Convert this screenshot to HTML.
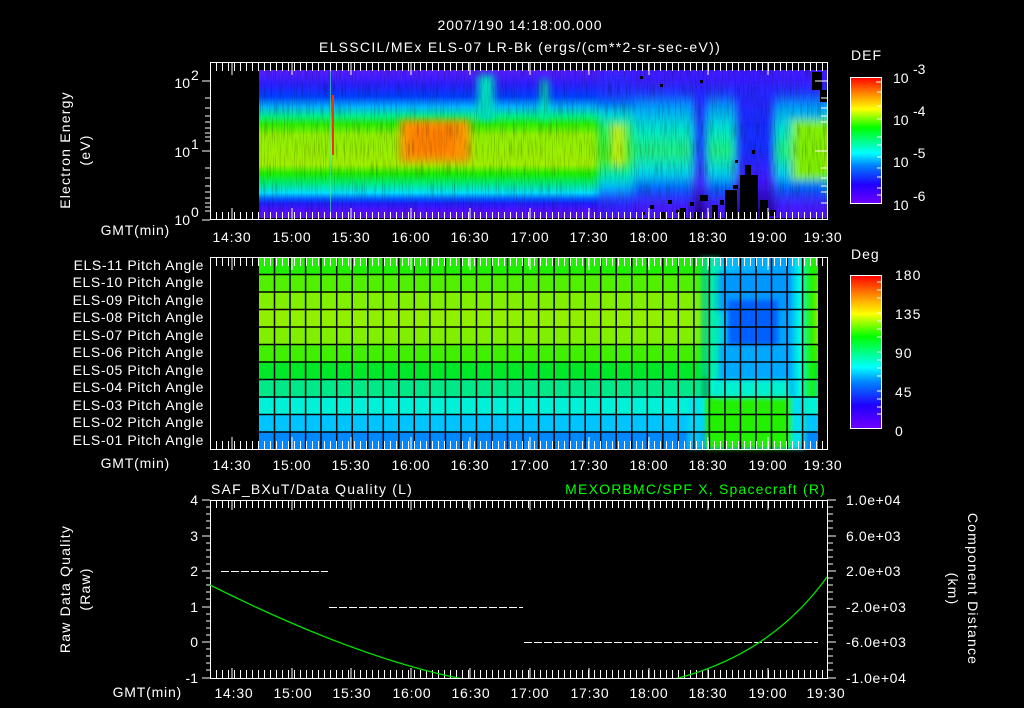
<!DOCTYPE html>
<html><head><meta charset="utf-8"><style>
html,body{margin:0;padding:0;background:#000;}
svg{display:block}
text{font-family:"Liberation Sans",sans-serif;fill:#fff;font-size:14px}
</style></head><body>
<svg width="1024" height="708" viewBox="0 0 1024 708" xmlns="http://www.w3.org/2000/svg">
<defs>
<linearGradient id="spec" x1="0" y1="70" x2="0" y2="218" gradientUnits="userSpaceOnUse">
<stop offset="0" stop-color="#5a1cff"/><stop offset="0.1" stop-color="#2a20ff"/>
<stop offset="0.18" stop-color="#0040ff"/><stop offset="0.25" stop-color="#00b8ff"/>
<stop offset="0.31" stop-color="#00f090"/><stop offset="0.37" stop-color="#30f000"/>
<stop offset="0.44" stop-color="#90f000"/><stop offset="0.64" stop-color="#a0f000"/>
<stop offset="0.7" stop-color="#20f000"/><stop offset="0.76" stop-color="#00f070"/>
<stop offset="0.83" stop-color="#00e0ff"/><stop offset="0.87" stop-color="#0060ff"/>
<stop offset="0.9" stop-color="#2020ff"/><stop offset="0.95" stop-color="#5010ff"/>
<stop offset="1" stop-color="#6010f0"/></linearGradient>
<linearGradient id="mid" x1="0" y1="70" x2="0" y2="218" gradientUnits="userSpaceOnUse">
<stop offset="0" stop-color="#4020ff"/><stop offset="0.15" stop-color="#2030ff"/>
<stop offset="0.22" stop-color="#0060ff"/><stop offset="0.3" stop-color="#00e0e0"/>
<stop offset="0.4" stop-color="#20f060"/><stop offset="0.6" stop-color="#40f020"/>
<stop offset="0.72" stop-color="#00f0c0"/><stop offset="0.8" stop-color="#00b0ff"/>
<stop offset="0.88" stop-color="#2030ff"/><stop offset="1" stop-color="#5010ff"/></linearGradient>
<linearGradient id="mid2" x1="0" y1="70" x2="0" y2="218" gradientUnits="userSpaceOnUse">
<stop offset="0" stop-color="#4020ff"/><stop offset="0.15" stop-color="#2030ff"/>
<stop offset="0.25" stop-color="#00a0ff"/><stop offset="0.4" stop-color="#00e8d0"/>
<stop offset="0.55" stop-color="#20f080"/><stop offset="0.7" stop-color="#00d8f0"/>
<stop offset="0.8" stop-color="#0060ff"/><stop offset="0.9" stop-color="#4020ff"/><stop offset="1" stop-color="#5010ff"/></linearGradient>
<linearGradient id="blu" x1="0" y1="70" x2="0" y2="218" gradientUnits="userSpaceOnUse">
<stop offset="0" stop-color="#3020ff"/><stop offset="0.5" stop-color="#1030ff"/>
<stop offset="0.75" stop-color="#4018ff"/><stop offset="1" stop-color="#200080"/></linearGradient>
<linearGradient id="cb" x1="0" y1="1" x2="0" y2="0">
<stop offset="0" stop-color="#7000ff"/><stop offset="0.15" stop-color="#2000ff"/>
<stop offset="0.3" stop-color="#0080ff"/><stop offset="0.4" stop-color="#00ffff"/>
<stop offset="0.5" stop-color="#00ff80"/><stop offset="0.6" stop-color="#00ff00"/>
<stop offset="0.75" stop-color="#ffff00"/><stop offset="0.88" stop-color="#ff8000"/>
<stop offset="1" stop-color="#ff0000"/></linearGradient>
<filter id="bl" filterUnits="userSpaceOnUse" x="0" y="0" width="1024" height="708"><feGaussianBlur stdDeviation="4"/></filter>
<filter id="bl2" filterUnits="userSpaceOnUse" x="0" y="0" width="1024" height="708"><feGaussianBlur stdDeviation="2"/></filter>
<filter id="noise" filterUnits="userSpaceOnUse" x="0" y="0" width="1024" height="708">
<feTurbulence type="fractalNoise" baseFrequency="0.9 0.05" numOctaves="1" seed="3"/>
<feColorMatrix values="0 0 0 0 0  0 0 0 0 0  0 0 0 0 0  0 0 0 -3 1.6"/>
</filter>
<clipPath id="c1"><rect x="259" y="70" width="569" height="148"/></clipPath>
<clipPath id="c3"><rect x="210" y="500" width="617" height="178"/></clipPath>
<linearGradient id="rt" x1="700" y1="0" x2="818" y2="0" gradientUnits="userSpaceOnUse">
<stop offset="0" stop-color="#000" stop-opacity="0"/><stop offset="0.1" stop-color="#00ffd0" stop-opacity="0.9"/>
<stop offset="0.2" stop-color="#00c0ff"/><stop offset="0.75" stop-color="#00a0ff"/>
<stop offset="0.85" stop-color="#00ffe0"/><stop offset="0.95" stop-color="#20f000" stop-opacity="0.8"/>
<stop offset="1" stop-color="#20f000" stop-opacity="0"/></linearGradient>
</defs>

<!-- titles -->
<text x="520" y="30" text-anchor="middle" font-size="17" letter-spacing="1">2007/190 14:18:00.000</text>
<text x="520" y="52" text-anchor="middle" font-size="17" letter-spacing="1.3">ELSSCIL/MEx ELS-07 LR-Bk  (ergs/(cm**2-sr-sec-eV))</text>

<!-- TOP PANEL -->
<g clip-path="url(#c1)">
<rect x="259" y="70" width="569" height="148" fill="url(#spec)"/>
<g filter="url(#bl)">
<rect x="598" y="70" width="35" height="148" fill="url(#mid)"/>
<rect x="633" y="70" width="62" height="148" fill="url(#mid2)"/>
<rect x="612" y="125" width="12" height="40" fill="#c0f000"/>
<rect x="693" y="70" width="14" height="148" fill="url(#blu)"/>
<rect x="707" y="70" width="28" height="148" fill="url(#mid2)"/>
<rect x="735" y="70" width="40" height="148" fill="url(#blu)"/>
<rect x="775" y="70" width="53" height="148" fill="url(#mid2)"/>
<rect x="792" y="120" width="36" height="60" fill="#80f000"/>
<rect x="400" y="120" width="70" height="42" fill="#ff9800"/>
<rect x="410" y="125" width="45" height="30" fill="#ff8000"/>
<rect x="478" y="75" width="16" height="45" fill="#00e0c0"/>
<rect x="541" y="80" width="7" height="40" fill="#00f0a0"/>
<rect x="630" y="60" width="200" height="25" fill="#4018ff" opacity="0.6"/>
</g>
<rect x="259" y="70" width="569" height="148" filter="url(#noise)" opacity="0.25"/>
<rect x="332" y="95" width="2" height="60" fill="#ff3000"/>
<rect x="330" y="70" width="1" height="150" fill="#40f0a0" opacity="0.6"/>
<g fill="#000">
<rect x="700" y="195" width="8" height="6"/><rect x="712" y="205" width="6" height="13"/><rect x="725" y="190" width="12" height="28"/>
<rect x="740" y="175" width="18" height="43"/><rect x="745" y="165" width="6" height="10"/><rect x="760" y="200" width="8" height="18"/>
<rect x="680" y="208" width="6" height="10"/><rect x="660" y="212" width="5" height="6"/><rect x="650" y="205" width="4" height="4"/>
<rect x="812" y="72" width="10" height="18"/><rect x="820" y="90" width="8" height="12"/><rect x="690" y="202" width="4" height="4"/>
<rect x="735" y="160" width="3" height="3"/><rect x="752" y="150" width="3" height="4"/><rect x="640" y="76" width="3" height="3"/>
<rect x="700" y="80" width="3" height="3"/><rect x="660" y="84" width="3" height="3"/><rect x="770" y="210" width="6" height="6"/>
<rect x="668" y="200" width="4" height="4"/><rect x="676" y="210" width="3" height="3"/><rect x="694" y="212" width="6" height="6"/>
<rect x="720" y="200" width="4" height="5"/><rect x="733" y="185" width="5" height="4"/><rect x="642" y="212" width="3" height="3"/>
</g>
</g>
<rect x="210.5" y="62.5" width="617" height="157" fill="none" stroke="#fff"/>
<g stroke="#fff">
<path d="M210 81h-8M210 151h-8M210 220h-8M210 98h-5M210 108h-5M210 116h-5M210 122h-5M210 128h-5M210 133h-5M210 137h-5M210 141h-5M210 168h-5M210 178h-5M210 186h-5M210 192h-5M210 198h-5M210 203h-5M210 207h-5M210 211h-5"/>
<path d="M827 81h-12M827 151h-12M827 98h-6M827 108h-6M827 116h-6M827 122h-6M827 168h-6M827 178h-6M827 186h-6M827 192h-6M827 203h-6"/>
</g>
<text x="190" y="88" text-anchor="end" font-size="15">10</text><text x="191" y="80" font-size="9">2</text>
<text x="190" y="157" text-anchor="end" font-size="15">10</text><text x="191" y="149" font-size="9">1</text>
<text x="190" y="225" text-anchor="end" font-size="15">10</text><text x="191" y="217" font-size="9">0</text>
<text transform="translate(70,150) rotate(-90)" text-anchor="middle" font-size="15" letter-spacing="1.2">Electron Energy</text>
<text transform="translate(90,150) rotate(-90)" text-anchor="middle" font-size="15" letter-spacing="1.2">(eV)</text>

<!-- MIDDLE PANEL -->
<g>
<rect x="259" y="257" width="559" height="17.5" fill="#20f000"/>
<rect x="259" y="274.5" width="559" height="17.5" fill="#50f000"/>
<rect x="259" y="292" width="559" height="17.5" fill="#80f000"/>
<rect x="259" y="309.5" width="559" height="17.5" fill="#90f000"/>
<rect x="259" y="327" width="559" height="17.5" fill="#80f000"/>
<rect x="259" y="344.5" width="559" height="17.5" fill="#40f000"/>
<rect x="259" y="362" width="559" height="17.5" fill="#00e828"/>
<rect x="259" y="379.5" width="559" height="17.5" fill="#00e888"/>
<rect x="259" y="397" width="559" height="17.5" fill="#00f0d8"/>
<rect x="259" y="414.5" width="559" height="17.5" fill="#00c4ff"/>
<rect x="259" y="432" width="559" height="17" fill="#0088ff"/>
<rect x="700" y="257" width="118" height="140" fill="url(#rt)"/>
<g filter="url(#bl2)">
<rect x="715" y="272" width="75" height="40" fill="#0098ff"/>
<rect x="728" y="300" width="50" height="60" fill="#0060ff"/>
<rect x="718" y="345" width="70" height="35" fill="#00a8ff"/>
<rect x="715" y="380" width="75" height="17" fill="#00f0d0"/>
<rect x="705" y="397" width="100" height="52" fill="#20f000"/>
<rect x="700" y="257" width="20" height="120" fill="#00e8a0" opacity="0.6"/>
<rect x="688" y="397" width="14" height="52" fill="#00e0f0" opacity="0.7"/>
<rect x="792" y="397" width="12" height="52" fill="#00e0f0"/>
</g>
<g stroke="#000" stroke-width="1.5">
<path d="M259 274.5H818M259 292H818M259 309.5H818M259 327H818M259 344.5H818M259 362H818M259 379.5H818M259 397H818M259 414.5H818M259 432H818"/>
<path d="M274.5 257V449M290 257V449M305.6 257V449M321 257V449M336.7 257V449M352.2 257V449M367.8 257V449M383.3 257V449M398.8 257V449M414.3 257V449M429.9 257V449M445.4 257V449M461 257V449M476.5 257V449M492 257V449M507.5 257V449M523 257V449M538.6 257V449M554.1 257V449M569.6 257V449M585.2 257V449M600.7 257V449M616.2 257V449M631.8 257V449M647.3 257V449M662.8 257V449M678.3 257V449M693.9 257V449M709.4 257V449M724.9 257V449M740.5 257V449M756 257V449M771.5 257V449M787.1 257V449M802.6 257V449"/>
</g>
</g>
<rect x="210.5" y="257.5" width="617" height="192" fill="none" stroke="#fff"/>
<g text-anchor="end" font-size="13" letter-spacing="0.6">
<text x="204" y="270">ELS-11 Pitch Angle</text><text x="204" y="287">ELS-10 Pitch Angle</text>
<text x="204" y="305">ELS-09 Pitch Angle</text><text x="204" y="322">ELS-08 Pitch Angle</text>
<text x="204" y="340">ELS-07 Pitch Angle</text><text x="204" y="357">ELS-06 Pitch Angle</text>
<text x="204" y="375">ELS-05 Pitch Angle</text><text x="204" y="392">ELS-04 Pitch Angle</text>
<text x="204" y="410">ELS-03 Pitch Angle</text><text x="204" y="427">ELS-02 Pitch Angle</text>
<text x="204" y="445">ELS-01 Pitch Angle</text>
</g>

<!-- time ticks -->
<g stroke="#fff">
<path d="M232 63v12M292 63v12M351 63v12M411 63v12M470 63v12M530 63v12M589 63v12M649 63v12M708 63v12M768 63v12M232 220v-12M292 220v-12M351 220v-12M411 220v-12M470 220v-12M530 220v-12M589 220v-12M649 220v-12M708 220v-12M768 220v-12"/>
<path d="M232 258v12M292 258v12M351 258v12M411 258v12M470 258v12M530 258v12M589 258v12M649 258v12M708 258v12M768 258v12M232 449v-12M292 449v-12M351 449v-12M411 449v-12M470 449v-12M530 449v-12M589 449v-12M649 449v-12M708 449v-12M768 449v-12"/>
<path d="M232 500v10M292 500v10M351 500v10M411 500v10M470 500v10M530 500v10M589 500v10M649 500v10M708 500v10M768 500v10M232 678v-10M292 678v-10M351 678v-10M411 678v-10M470 678v-10M530 678v-10M589 678v-10M649 678v-10M708 678v-10M768 678v-10"/>
</g>
<g stroke="#fff" stroke-dasharray="1 5" stroke-dashoffset="-2">
<path d="M214 67H827M214 216H827M214 262H827M214 445H827M214 504H827M214 674H827" stroke-width="8"/>
</g>

<g font-size="15" letter-spacing="0.8">
<text x="170" y="235" text-anchor="end">GMT(min)</text>
<text x="170" y="468" text-anchor="end">GMT(min)</text>
<text x="182" y="697" text-anchor="end">GMT(min)</text>
</g>
<g font-size="15" text-anchor="middle" letter-spacing="0.8">
<text x="232" y="242">14:30</text><text x="292" y="242">15:00</text><text x="351" y="242">15:30</text><text x="411" y="242">16:00</text><text x="470" y="242">16:30</text><text x="530" y="242">17:00</text><text x="589" y="242">17:30</text><text x="649" y="242">18:00</text><text x="708" y="242">18:30</text><text x="768" y="242">19:00</text><text x="823" y="242">19:30</text>
<text x="232" y="470">14:30</text><text x="292" y="470">15:00</text><text x="351" y="470">15:30</text><text x="411" y="470">16:00</text><text x="470" y="470">16:30</text><text x="530" y="470">17:00</text><text x="589" y="470">17:30</text><text x="649" y="470">18:00</text><text x="708" y="470">18:30</text><text x="768" y="470">19:00</text><text x="823" y="470">19:30</text>
<text x="234" y="698">14:30</text><text x="293" y="698">15:00</text><text x="352" y="698">15:30</text><text x="412" y="698">16:00</text><text x="471" y="698">16:30</text><text x="530" y="698">17:00</text><text x="590" y="698">17:30</text><text x="649" y="698">18:00</text><text x="708" y="698">18:30</text><text x="768" y="698">19:00</text><text x="826" y="698">19:30</text>
</g>

<!-- colorbars -->
<text x="851" y="60" font-size="16" letter-spacing="1">DEF</text>
<rect x="850.5" y="77.5" width="31" height="126" fill="url(#cb)" stroke="#fff"/>
<g stroke="#fff"><path d="M881 82h-5M881 92h-4M881 106h-4M881 119h-4M881 137h-4M881 145h-4M881 157h-4M881 168h-4M881 177h-4M881 188h-4M881 195h-4"/></g>
<text x="893" y="83" font-size="16">10</text><text x="913" y="74" font-size="10">-3</text>
<text x="893" y="125" font-size="16">10</text><text x="913" y="116" font-size="10">-4</text>
<text x="893" y="167" font-size="16">10</text><text x="913" y="158" font-size="10">-5</text>
<text x="893" y="210" font-size="16">10</text><text x="913" y="201" font-size="10">-6</text>

<text x="851" y="259" font-size="16" letter-spacing="1">Deg</text>
<rect x="850.5" y="275.5" width="31" height="153" fill="url(#cb)" stroke="#fff"/>
<g stroke="#fff"><path d="M881 282h-4M881 290h-4M881 298h-4M881 313h-4M881 321h-4M881 329h-4M881 337h-4M881 352h-4M881 360h-4M881 368h-4M881 376h-4M881 391h-4M881 399h-4M881 407h-4M881 414h-4"/></g>
<g font-size="16" letter-spacing="1"><text x="895" y="280">180</text><text x="895" y="319">135</text><text x="895" y="358">90</text><text x="895" y="397">45</text><text x="895" y="436">0</text></g>

<!-- BOTTOM PANEL -->
<text x="211" y="494" font-size="16" letter-spacing="1.2">SAF_BXuT/Data Quality (L)</text>
<text x="826" y="494" font-size="16" letter-spacing="1.2" text-anchor="end" style="fill:#00ff00">MEXORBMC/SPF X, Spacecraft (R)</text>
<rect x="210.5" y="500.5" width="617" height="178" fill="none" stroke="#fff"/>
<g stroke="#fff">
<path d="M210 500h-8M210 536h-8M210 571h-8M210 607h-8M210 642h-8M210 678h-8M210 507h-4M210 514h-4M210 521h-4M210 528h-4M210 543h-4M210 550h-4M210 557h-4M210 564h-4M210 578h-4M210 585h-4M210 592h-4M210 599h-4M210 614h-4M210 621h-4M210 628h-4M210 635h-4M210 649h-4M210 656h-4M210 663h-4M210 670h-4"/>
<path d="M827 500h9M827 536h9M827 571h9M827 607h9M827 642h9M827 678h9M827 507h6M827 514h6M827 521h6M827 528h6M827 543h6M827 550h6M827 557h6M827 564h6M827 578h6M827 585h6M827 592h6M827 599h6M827 614h6M827 621h6M827 628h6M827 635h6M827 649h6M827 656h6M827 663h6M827 670h6"/>
</g>
<g font-size="15" text-anchor="end">
<text x="198" y="505">4</text><text x="198" y="541">3</text><text x="198" y="576">2</text><text x="198" y="612">1</text><text x="198" y="647">0</text><text x="198" y="683">-1</text>
</g>
<g font-size="14" letter-spacing="0.6">
<text x="846" y="505">1.0e+04</text><text x="846" y="541">6.0e+03</text><text x="846" y="576">2.0e+03</text><text x="846" y="612">-2.0e+03</text><text x="846" y="647">-6.0e+03</text><text x="846" y="683">-1.0e+04</text>
</g>
<g stroke="#fff" stroke-dasharray="8 2">
<path d="M221 571.5H328M329 607.5H523M524 642.5H818"/>
</g>
<g clip-path="url(#c3)">
<path d="M210 585 C 400 680 500 690 580 690 S 760 670 827 577" fill="none" stroke="#00e000" stroke-width="1.3"/>
</g>
<text transform="translate(70,589) rotate(-90)" text-anchor="middle" font-size="16" letter-spacing="1.2">Raw Data Quality</text>
<text transform="translate(90,589) rotate(-90)" text-anchor="middle" font-size="16" letter-spacing="1.2">(Raw)</text>
<text transform="translate(968,589) rotate(90)" text-anchor="middle" font-size="16" letter-spacing="1.2">Component Distance</text>
<text transform="translate(948,589) rotate(90)" text-anchor="middle" font-size="16" letter-spacing="1.2">(km)</text>
</svg>
</body></html>
